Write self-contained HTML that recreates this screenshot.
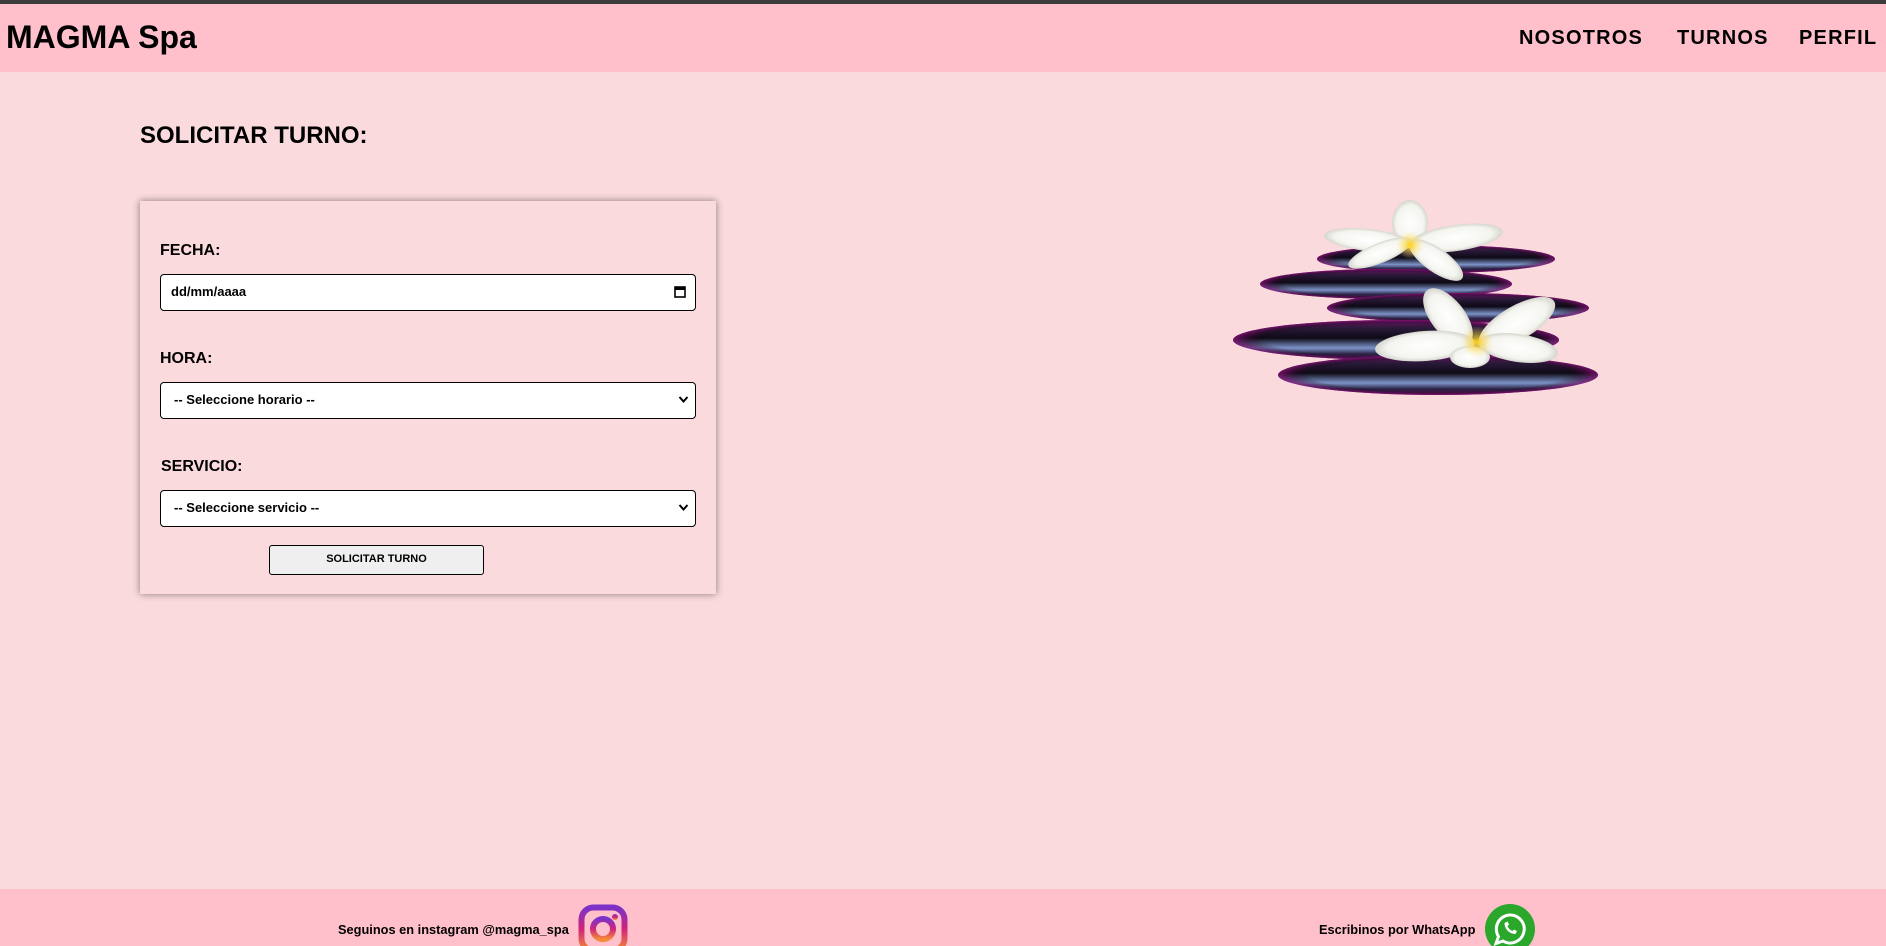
<!DOCTYPE html>
<html><head><meta charset="utf-8"><style>
*{box-sizing:border-box;margin:0;padding:0}
html{width:1886px;height:946px;overflow:hidden;background:#fadadd}
body{width:1886px;height:946px;overflow:hidden;background:#fadadd;font-family:"Liberation Sans",Arial,sans-serif;position:relative;color:#000}
.a{position:absolute}
#top{left:0;top:0;width:1886px;height:4px;background:#3c3c3c}
#hdr{left:0;top:4px;width:1886px;height:68px;background:#ffc0cb}
#logo{left:6px;top:18px;font-size:32px;font-weight:bold;line-height:38px}
.nav{top:26px;font-size:20px;font-weight:bold;letter-spacing:1.2px;line-height:24px}
#title{left:140px;top:122px;font-size:24px;font-weight:bold;line-height:28px}
#card{left:140px;top:201px;width:576px;height:393px;background:#fadadd;box-shadow:0 0 7px rgba(0,0,0,.45)}
.lbl{font-size:16px;font-weight:bold;line-height:18px}
.inp{left:160px;width:536px;height:37px;background:#fff;border:1.5px solid #000;border-radius:4px;font-size:13px;font-weight:bold;line-height:34px}
.chev{position:absolute;right:6px;top:12px}
#btn{left:269px;top:545px;width:215px;height:30px;background:#efefef;border:1.5px solid #000;border-radius:3px;font-size:11px;font-weight:bold;text-align:center;line-height:27px}
#ftr{left:0;top:889px;width:1886px;height:57px;background:#ffc0cb}
.ft{top:922px;font-size:12.8px;font-weight:bold;line-height:16px}
</style></head><body>
<div class="a" id="top"></div>
<div class="a" id="hdr"></div>
<div class="a" id="logo">MAGMA Spa</div>
<div class="a nav" style="left:1519px">NOSOTROS</div>
<div class="a nav" style="left:1677px">TURNOS</div>
<div class="a nav" style="left:1799px">PERFIL</div>
<div class="a" id="title">SOLICITAR TURNO:</div>
<div class="a" id="card"></div>
<div class="a lbl" style="left:160px;top:242px">FECHA:</div>
<div class="a inp" style="top:274px;padding-left:10px">dd/mm/aaaa
<svg class="chev" style="top:10px;right:9px" width="12" height="14" viewBox="0 0 12 14"><rect x="1" y="2" width="10" height="10" fill="none" stroke="#000" stroke-width="1.6"/><rect x="1" y="2" width="10" height="3" fill="#000"/></svg></div>
<div class="a lbl" style="left:160px;top:350px">HORA:</div>
<div class="a inp" style="top:382px;padding-left:13px">-- Seleccione horario --
<svg class="chev" width="11" height="9" viewBox="0 0 11 9"><path d="M1.5 2 L5.5 6.5 L9.5 2" fill="none" stroke="#000" stroke-width="2"/></svg></div>
<div class="a lbl" style="left:161px;top:458px">SERVICIO:</div>
<div class="a inp" style="top:490px;padding-left:13px">-- Seleccione servicio --
<svg class="chev" width="11" height="9" viewBox="0 0 11 9"><path d="M1.5 2 L5.5 6.5 L9.5 2" fill="none" stroke="#000" stroke-width="2"/></svg></div>
<div class="a" id="btn">SOLICITAR TURNO</div>

<svg class="a" style="left:1220px;top:195px" width="390" height="210" viewBox="0 0 390 210">
<defs>
<linearGradient id="st" x1="0" y1="0" x2="0" y2="1">
<stop offset="0" stop-color="#6a1060"/><stop offset="0.2" stop-color="#2a1a3a"/><stop offset="0.45" stop-color="#0e0a16"/><stop offset="0.7" stop-color="#7d93c8"/><stop offset="0.85" stop-color="#2a2244"/><stop offset="1" stop-color="#5a0d55"/>
</linearGradient>
<radialGradient id="edge" cx="50%" cy="50%" r="50%">
<stop offset="0.8" stop-color="#000" stop-opacity="0"/><stop offset="1" stop-color="#8a1078" stop-opacity="0.8"/>
</radialGradient>
<radialGradient id="pt" cx="50%" cy="50%" r="55%">
<stop offset="0" stop-color="#ffffff"/><stop offset="0.7" stop-color="#f4f4ef"/><stop offset="1" stop-color="#c8c8c0"/>
</radialGradient>
<radialGradient id="yc"><stop offset="0" stop-color="#ffd21a"/><stop offset="1" stop-color="#ffe98a" stop-opacity="0"/></radialGradient>
</defs>
<g>
<ellipse cx="216" cy="64" rx="119" ry="14" fill="url(#st)"/><ellipse cx="216" cy="64" rx="119" ry="14" fill="url(#edge)"/>
<ellipse cx="166" cy="89" rx="126" ry="15" fill="url(#st)"/><ellipse cx="166" cy="89" rx="126" ry="15" fill="url(#edge)"/>
<ellipse cx="238" cy="113" rx="131" ry="15" fill="url(#st)"/><ellipse cx="238" cy="113" rx="131" ry="15" fill="url(#edge)"/>
<ellipse cx="176" cy="145" rx="163" ry="20" fill="url(#st)"/><ellipse cx="176" cy="145" rx="163" ry="20" fill="url(#edge)"/>
<ellipse cx="218" cy="180" rx="160" ry="20" fill="url(#st)"/><ellipse cx="218" cy="180" rx="160" ry="20" fill="url(#edge)"/>
</g>
<g>
<ellipse cx="190" cy="28" rx="18" ry="23" fill="url(#pt)"/>
<ellipse cx="148" cy="45" rx="44" ry="11" transform="rotate(6 148 45)" fill="url(#pt)"/>
<ellipse cx="236" cy="43" rx="47" ry="13" transform="rotate(-8 236 43)" fill="url(#pt)"/>
<ellipse cx="160" cy="58" rx="34" ry="10" transform="rotate(-22 160 58)" fill="url(#pt)"/>
<ellipse cx="216" cy="65" rx="32" ry="12" transform="rotate(35 216 65)" fill="url(#pt)"/>
<circle cx="190" cy="50" r="14" fill="url(#yc)"/>
</g>
<g>
<ellipse cx="228" cy="122" rx="34" ry="17" transform="rotate(52 228 122)" fill="url(#pt)"/>
<ellipse cx="297" cy="128" rx="43" ry="17" transform="rotate(-30 297 128)" fill="url(#pt)"/>
<ellipse cx="205" cy="151" rx="50" ry="15" transform="rotate(-4 205 151)" fill="url(#pt)"/>
<ellipse cx="298" cy="153" rx="40" ry="14" transform="rotate(8 298 153)" fill="url(#pt)"/>
<ellipse cx="250" cy="162" rx="20" ry="11" fill="url(#pt)"/>
<circle cx="257" cy="147" r="16" fill="url(#yc)"/>
</g>
</svg>

<div class="a" id="ftr"></div>
<div class="a ft" style="left:338px">Seguinos en instagram @magma_spa</div>
<svg class="a" style="left:578px;top:904px" width="50" height="50" viewBox="0 0 50 50">
<defs><linearGradient id="ig" x1="0" y1="0" x2="0" y2="1"><stop offset="0" stop-color="#7b32c8"/><stop offset="0.5" stop-color="#d0257a"/><stop offset="1" stop-color="#f58a3a"/></linearGradient></defs>
<rect x="3.5" y="3.5" width="43" height="43" rx="12" fill="none" stroke="url(#ig)" stroke-width="6"/>
<circle cx="25" cy="25" r="10" fill="none" stroke="url(#ig)" stroke-width="6"/>
<circle cx="37" cy="13" r="3" fill="url(#ig)"/>
</svg>
<div class="a ft" style="left:1319px">Escribinos por WhatsApp</div>
<svg class="a" style="left:1485px;top:904px" width="50" height="50" viewBox="0 0 50 50">
<circle cx="25" cy="25" r="25" fill="#2ba72b"/>
<path d="M25 11 a14 14 0 1 1 -7 26 l-7 2.5 2.5 -7 A14 14 0 0 1 25 11z" fill="none" stroke="#fff" stroke-width="3"/>
<path d="M19.5 19 c0 6 5 11 11 11 l1.5 -3 -3 -1.5 -1.5 1.5 c-2.5 -1 -4 -2.5 -5 -5 l1.5 -1.5 -1.5 -3z" fill="#fff"/>
</svg>
</body></html>
